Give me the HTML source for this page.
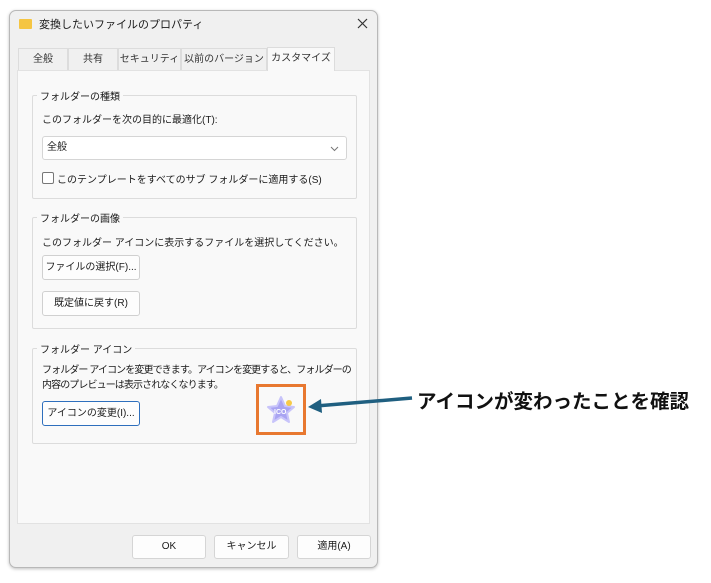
<!DOCTYPE html>
<html><head><meta charset="utf-8"><style>
*{box-sizing:border-box;margin:0;padding:0}
body{width:711px;height:583px;background:#fff;position:relative;overflow:hidden;font-family:"Liberation Sans","Noto Sans CJK JP",sans-serif;font-size:10px;color:#1a1a1a}
.a{position:absolute;white-space:nowrap}
.win{left:9px;top:10px;width:369px;height:558px;background:#f0f0f0;border:1px solid #b8b8b8;border-radius:7px;box-shadow:0 1px 3px rgba(0,0,0,.25)}
.panel{left:17px;top:70px;width:353px;height:454px;background:#f9f9f9;border:1px solid #e2e2e2}
.tab{top:48px;height:22px;border:1px solid #dcdcdc;border-bottom:none;background:#f0f0f0;text-align:center;line-height:22px;color:#333}
.grp{left:32px;width:325px;border:1px solid #dcdcdc;border-radius:2px}
.gl{left:37px;background:#f9f9f9;padding:0 3px}
.btn{left:42px;width:98px;height:25px;background:#fdfdfd;border:1px solid #d0d0d0;border-radius:3px;text-align:center;line-height:23px}
.bb{top:535px;height:24px;background:#fdfdfd;border:1px solid #d5d5d5;border-radius:3px;text-align:center;line-height:22px}
</style></head><body>
<div class="a win"></div>
<div class="a" style="left:19px;top:19px;width:13px;height:10px;background:#f5c542;border-radius:1px"></div>
<div class="a" style="left:39px;top:16px;font-size:11px">変換したいファイルのプロパティ</div>
<svg class="a" style="left:357px;top:18px" width="11" height="11"><path d="M1 1L10 10M10 1L1 10" stroke="#333" stroke-width="1.2"/></svg>
<div class="a panel"></div>
<div class="a tab" style="left:18px;width:50px">全般</div>
<div class="a tab" style="left:68px;width:50px">共有</div>
<div class="a tab" style="left:118px;width:63px">セキュリティ</div>
<div class="a tab" style="left:181px;width:86px">以前のバージョン</div>
<div class="a tab" style="left:267px;top:47px;width:68px;height:24px;background:#f9f9f9;border-color:#dcdcdc">カスタマイズ</div>

<div class="a grp" style="top:95px;height:104px"></div>
<div class="a gl" style="top:88px">フォルダーの種類</div>
<div class="a" style="left:42px;top:111px">このフォルダーを次の目的に最適化(T):</div>
<div class="a" style="left:42px;top:136px;width:305px;height:24px;background:#fff;border:1px solid #d5d5d5;border-radius:3px;padding-left:4px;line-height:22px">全般<svg style="position:absolute;right:7px;top:9px" width="9" height="6"><path d="M1 1L4.5 4.5L8 1" stroke="#777" fill="none"/></svg></div>
<div class="a" style="left:42px;top:172px;width:12px;height:12px;border:1px solid #777;border-radius:2px;background:#fff"></div>
<div class="a" style="left:57px;top:171px">このテンプレートをすべてのサブ フォルダーに適用する(S)</div>

<div class="a grp" style="top:217px;height:112px"></div>
<div class="a gl" style="top:210px">フォルダーの画像</div>
<div class="a" style="left:42px;top:234px">このフォルダー アイコンに表示するファイルを選択してください。</div>
<div class="a btn" style="top:255px">ファイルの選択(F)...</div>
<div class="a btn" style="top:291px">既定値に戻す(R)</div>

<div class="a grp" style="top:348px;height:96px"></div>
<div class="a gl" style="top:341px">フォルダー アイコン</div>
<div class="a" style="left:42px;top:363px;line-height:15px;letter-spacing:-0.9px">フォルダー アイコンを変更できます。アイコンを変更すると、フォルダーの<br>内容のプレビューは表示されなくなります。</div>
<div class="a btn" style="top:401px;border:1.5px solid #2e6fbd">アイコンの変更(I)...</div>
<div class="a" style="left:256px;top:384px;width:50px;height:51px;border:3px solid #e87830;background:#f9f9f9"></div>
<svg class="a" style="left:264px;top:393px" width="34" height="34" viewBox="0 0 34 34"><path d="M17 4 L21 13 L30 14 L23 20 L25 29 L17 24 L9 29 L11 20 L4 14 L13 13Z" fill="#a9a4f2" stroke="#c8c4fa" stroke-linejoin="round" stroke-width="2"/><circle cx="25" cy="10" r="3" fill="#f7c948"/><text x="10" y="21" font-size="7" fill="#fff" font-weight="bold" font-family="Liberation Sans">ICO</text></svg>
<svg class="a" style="left:300px;top:390px" width="115" height="25"><line x1="112" y1="8" x2="16" y2="16" stroke="#1f5f80" stroke-width="3.5"/><path d="M8 17 L21 9 L22 23Z" fill="#1f5f80"/></svg>
<div class="a" style="left:417px;top:385px;font-size:19.5px;font-weight:bold;color:#111">アイコンが変わったことを確認</div>

<div class="a bb" style="left:132px;width:74px">OK</div>
<div class="a bb" style="left:214px;width:75px">キャンセル</div>
<div class="a bb" style="left:297px;width:74px">適用(A)</div>
</body></html>
